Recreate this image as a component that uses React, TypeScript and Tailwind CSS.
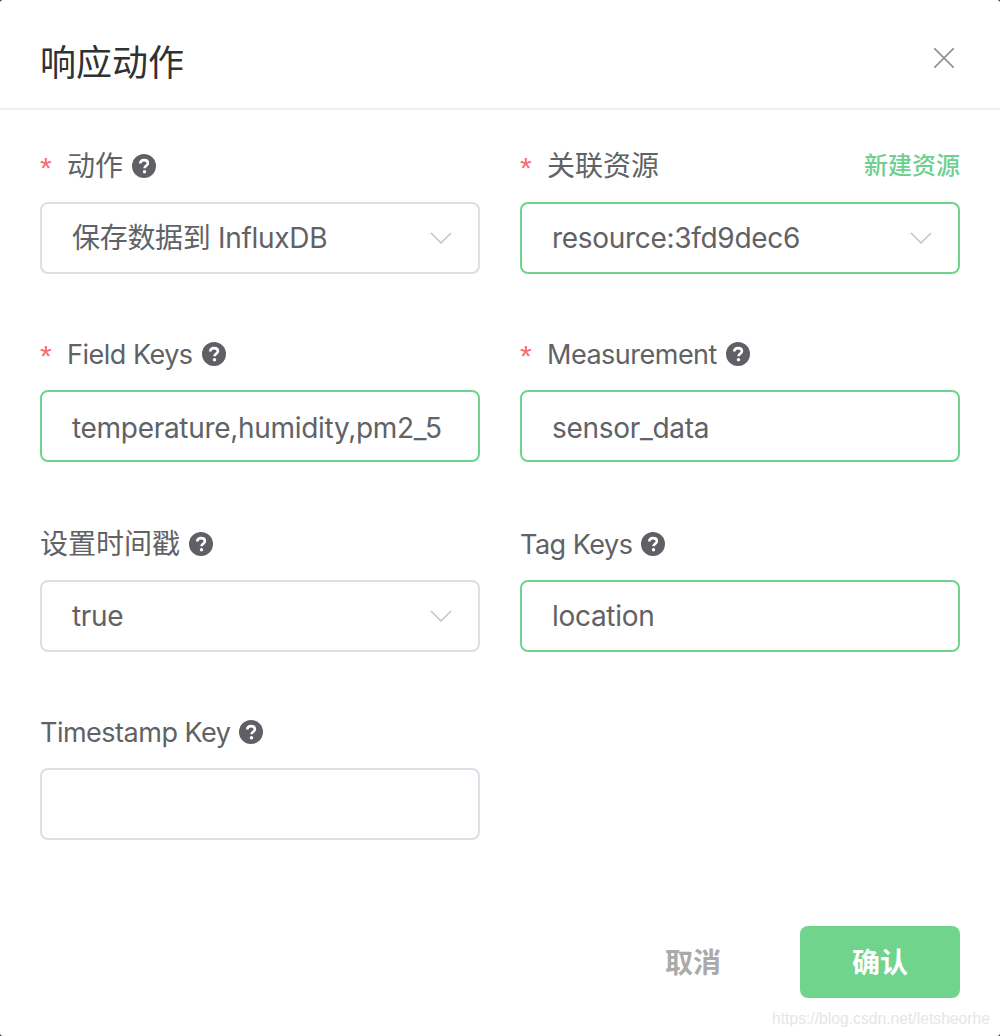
const Help = () => (
  <svg viewBox="0 0 24 24" className="w-6 h-6 shrink-0 ml-[9px]">
    <circle cx="12" cy="12" r="12" fill="#5f5f66" />
    <path
      d="M8.2 9.500c.2-2.200 1.800-3.400 3.900-3.400 2.200 0 3.800 1.300 3.800 3.100 0 1.300-.7 2-1.800 2.700-1.100.7-1.500 1.100-1.500 2.300"
      fill="none"
      stroke="#fff"
      strokeWidth="2.600"
    />
    <circle cx="12.500" cy="17.700" r="1.700" fill="#fff" />
  </svg>
);

const Arrow = () => (
  <svg viewBox="0 0 22 12" className="w-[22px] h-3 shrink-0">
    <path d="M1 1l10 10L21 1" fill="none" stroke="#c0c4cc" strokeWidth="1.500" />
  </svg>
);

const Label = ({ text, required, help = true }: { text: string; required?: boolean; help?: boolean }) => {
  const latin = /^[a-z ]+$/i.test(text);
  return (
    <div className={`flex items-center h-6 text-[#606266] ${latin ? "text-[27px] tracking-[-0.5px]" : "text-[28px]"}`}>
      {required && (
        <span className="w-[27px] text-[#f56c6c] text-[30px] leading-none mt-1 font-['Liberation_Sans',sans-serif]">*</span>
      )}
      <span className={`whitespace-nowrap ${latin ? "mt-0.5" : ""}`}>{text}</span>
      {help && <Help />}
    </div>
  );
};

const Field = ({ value, active, select, low }: { value?: string; active?: boolean; select?: boolean; low?: boolean }) => (
  <div
    className={`flex items-center justify-between h-[72px] pl-[30px] pr-[26px] mt-6 bg-white border-2 rounded-lg text-[28px] tracking-[-0.3px] text-[#606266] ${
      active ? "border-[#6fd48c]" : "border-[#dcdfe6]"
    } ${low ? "pt-1" : ""}`}
  >
    <span className="whitespace-nowrap">{value}</span>
    {select && <Arrow />}
  </div>
);

export default function App() {
  return (
    <div className="w-[1000px] h-[1036px] bg-[#333333]">
      <div className="relative h-full rounded-[3px] bg-white font-['Inter','Noto_Sans_CJK_SC',sans-serif]">
        <div className="flex items-center justify-between h-[110px] pl-10 pr-[46px] border-b-2 border-[#f0f0f0]">
          <h1 className="text-[36px] font-normal text-[#303133] mt-[18px]">响应动作</h1>
          <svg viewBox="0 0 20 20" className="w-5 h-5 mt-2">
            <path d="M0 0l20 20M20 0L0 20" fill="none" stroke="#909399" strokeWidth="1.700" />
          </svg>
        </div>

        <div className="grid grid-cols-2 gap-x-10 gap-y-[68px] px-10 pt-[44px]">
          <div>
            <Label text="动作" required />
            <Field value="保存数据到 InfluxDB" select />
          </div>
          <div>
            <div className="flex items-center justify-between h-6">
              <Label text="关联资源" required help={false} />
              <span className="text-2xl leading-none font-medium text-[#6fcf8e]">新建资源</span>
            </div>
            <Field value="resource:3fd9dec6" active select />
          </div>
          <div>
            <Label text="Field Keys" required />
            <Field value="temperature,humidity,pm2_5" active low />
          </div>
          <div>
            <Label text="Measurement" required />
            <Field value="sensor_data" active low />
          </div>
          <div className="mt-0.5">
            <Label text="设置时间戳" />
            <Field value="true" select />
          </div>
          <div className="mt-0.5">
            <Label text="Tag Keys" />
            <Field value="location" active />
          </div>
          <div>
            <Label text="Timestamp Key" />
            <Field />
          </div>
        </div>

        <div className="flex justify-end items-center mt-[86px] pr-10">
          <span className="text-[28px] font-bold text-[#aaaaaa] mr-[79px] pt-0.5">取消</span>
          <button className="w-40 h-[72px] pt-0.5 rounded-lg bg-[#71d48d] text-[28px] font-bold text-white">确认</button>
        </div>

        <span className="absolute right-[10px] bottom-2 text-[15.7px] leading-[18px] text-[#e6e6e6] font-['Liberation_Sans',sans-serif]">
          https://blog.csdn.net/letsheorhe
        </span>
      </div>
    </div>
  );
}
